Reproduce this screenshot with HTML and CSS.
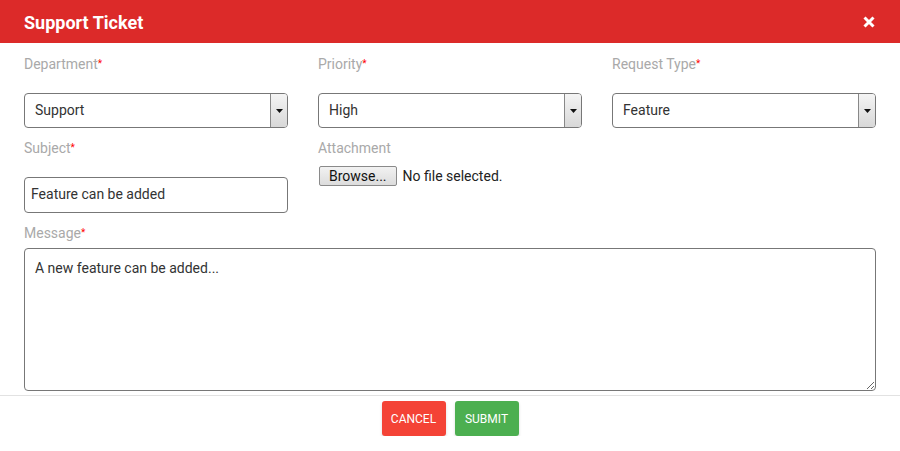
FILE: index.html
```html
<!DOCTYPE html>
<html lang="en">
<head>
    <meta charset="UTF-8">
    <meta name="viewport" content="width=device-width, initial-scale=1.0">
    <title>Support Ticket</title>
    <link rel="stylesheet" href="styles.css">
</head>
<body>
    <div class="modal">
        <div class="modal-header">
            <h1>Support Ticket</h1>
            <span class="close"><svg width="12" height="12" viewBox="0 0 12 12"><path d="M1.5 1.5l9 9M10.5 1.5l-9 9" stroke="white" stroke-width="3"/></svg></span>
        </div>
        <form class="ticket-form">
            <div class="row">
                <div class="field">
                    <label>Department<span class="req">*</span></label>
                    <div class="select-wrap">
                        <select>
                            <option>Support</option>
                            <option>Sales</option>
                        </select>
                        <span class="arrow"><svg width="7" height="4" viewBox="0 0 7 4"><path d="M0 0h7L3.5 4z" fill="#111"/></svg></span>
                    </div>
                </div>
                <div class="field">
                    <label>Priority<span class="req">*</span></label>
                    <div class="select-wrap">
                        <select>
                            <option>High</option>
                            <option>Low</option>
                        </select>
                        <span class="arrow"><svg width="7" height="4" viewBox="0 0 7 4"><path d="M0 0h7L3.5 4z" fill="#111"/></svg></span>
                    </div>
                </div>
                <div class="field">
                    <label>Request Type<span class="req">*</span></label>
                    <div class="select-wrap">
                        <select>
                            <option>Feature</option>
                            <option>Bug</option>
                        </select>
                        <span class="arrow"><svg width="7" height="4" viewBox="0 0 7 4"><path d="M0 0h7L3.5 4z" fill="#111"/></svg></span>
                    </div>
                </div>
            </div>
            <div class="row">
                <div class="field">
                    <label>Subject<span class="req">*</span></label>
                    <input type="text" class="text-input" value="Feature can be added">
                </div>
                <div class="field">
                    <label>Attachment</label>
                    <div class="file-row">
                        <span class="browse">Browse...</span>
                        <span class="file-name">No file selected.</span>
                    </div>
                </div>
                <div class="field"></div>
            </div>
            <div class="message">
                <label>Message<span class="req">*</span></label>
                <textarea>A new feature can be added...</textarea>
            </div>
        </form>
        <div class="modal-footer">
            <button class="btn cancel">Cancel</button>
            <button class="btn submit">Submit</button>
        </div>
    </div>
</body>
</html>
```

FILE: styles.css
```css
body {
    margin: 0;
    font-family: Roboto, Arial, sans-serif;
    background: white;
}
.modal-header {
    height: 43px;
    background-color: #dc2a29;
    color: white;
    display: flex;
    align-items: center;
    justify-content: space-between;
    padding: 0 24px;
}
.modal-header h1 {
    margin: 0 0 -2px;
    font-size: 18px;
    font-weight: bold;
}
.close {
    display: flex;
    margin-right: 1px;
}
.ticket-form {
    padding: 11px 24px 4px;
}
.row {
    display: grid;
    grid-template-columns: repeat(3, 1fr);
    gap: 30px;
    margin-bottom: 10px;
}
label {
    display: block;
    height: 20px;
    line-height: 20px;
    font-size: 14px;
    color: #a9a9a9;
}
.req {
    color: #f00;
    font-size: 10px;
    vertical-align: top;
}
.select-wrap {
    position: relative;
    margin-top: 19px;
}
select {
    appearance: none;
    display: block;
    width: 100%;
    height: 35px;
    padding: 0 10px 2px;
    border: 1px solid #777;
    border-radius: 4px;
    background: white;
    font-family: Roboto, Arial, sans-serif;
    font-size: 14px;
    color: #333;
}
.arrow {
    position: absolute;
    top: 1px;
    right: 1px;
    bottom: 1px;
    width: 16px;
    border-left: 1px solid #888;
    border-radius: 0 3px 3px 0;
    background: linear-gradient(#f4f4f4, #d8d8d8);
    display: flex;
    align-items: center;
    justify-content: center;
}
.text-input {
    display: block;
    box-sizing: border-box;
    width: 100%;
    height: 36px;
    margin-top: 19px;
    padding: 0 6px 2px;
    border: 1px solid #777;
    border-radius: 4px;
    font-family: Roboto, Arial, sans-serif;
    font-size: 14px;
    color: #333;
}
.file-row {
    display: flex;
    align-items: center;
    gap: 6px;
    margin-top: 8px;
}
.browse {
    box-sizing: border-box;
    height: 20px;
    line-height: 18px;
    padding: 0 9px;
    margin-left: 1px;
    border: 1px solid #8a8a8a;
    border-radius: 2px;
    background: linear-gradient(#f2f2f2, #dcdcdc);
    font-size: 14px;
    color: #111;
}
.file-name {
    font-size: 14px;
    color: #222;
}
.message textarea {
    display: block;
    box-sizing: border-box;
    width: 100%;
    height: 143px;
    margin-top: 5px;
    padding: 11px 10px;
    border: 1px solid #777;
    border-radius: 4px;
    font-family: Roboto, Arial, sans-serif;
    font-size: 14px;
    color: #333;
    resize: vertical;
}
.modal-footer {
    border-top: 1px solid #e2e2e2;
    padding-top: 5px;
    display: flex;
    justify-content: center;
    gap: 9px;
}
.btn {
    width: 64px;
    height: 35px;
    border: none;
    border-radius: 3px;
    color: white;
    font-family: Roboto, Arial, sans-serif;
    font-size: 12px;
    text-transform: uppercase;
    box-shadow: 0 2px 3px rgba(0, 0, 0, 0.15);
    cursor: pointer;
}
.cancel {
    background-color: #f44336;
}
.submit {
    background-color: #4caf50;
}
```
